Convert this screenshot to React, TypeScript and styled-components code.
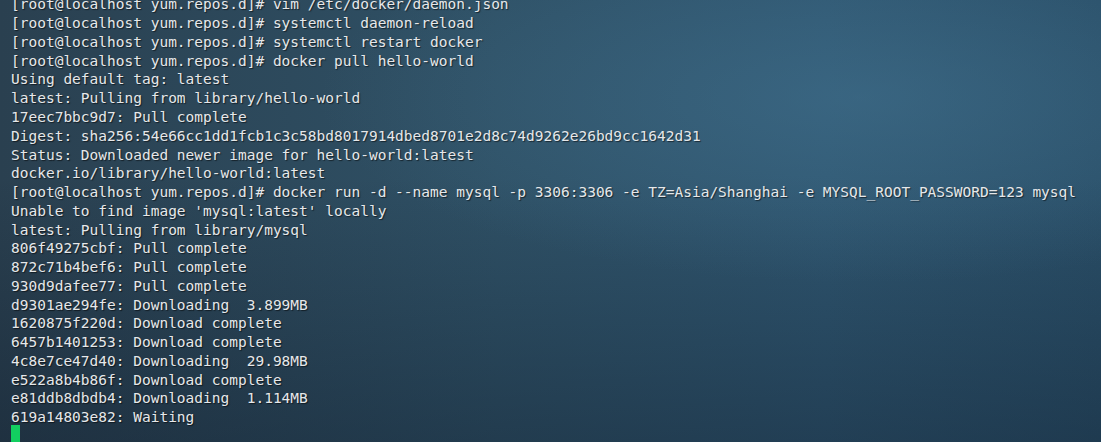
import React from "react";
import styled, { createGlobalStyle } from "styled-components";

const Global = createGlobalStyle`
  html, body {
    margin: 0;
    padding: 0;
    width: 1101px;
    height: 442px;
    overflow: hidden;
  }
`;

const Screen = styled.div`
  width: 1101px;
  height: 442px;
  overflow: hidden;
  box-sizing: border-box;
  padding-left: 11px;
  background:
    radial-gradient(ellipse 70% 60% at 78% 22%, rgba(70, 120, 150, 0.45), rgba(70, 120, 150, 0) 70%),
    linear-gradient(180deg, rgba(0, 0, 0, 0) 40%, rgba(10, 20, 35, 0.35) 100%),
    linear-gradient(90deg, #2a4050 0%, #2f5166 45%, #2f5670 75%, #2a4f68 100%);
`;

const Output = styled.pre`
  margin: -4.6px 0 0 0;
  font-family: "DejaVu Sans Mono", "Liberation Mono", monospace;
  font-size: 14.5px;
  line-height: 18.77px;
  color: #e6e8ea;
  text-shadow: 1px 1px 1px rgba(0, 0, 0, 0.55);
  white-space: pre;
`;

const Line = styled.div`
  height: 18.77px;
`;

const Cursor = styled.span`
  display: inline-block;
  width: 9px;
  height: 20px;
  margin-top: -2px;
  vertical-align: top;
  background: #12cf60;
`;

const lines = [
  "[root@localhost yum.repos.d]# vim /etc/docker/daemon.json",
  "[root@localhost yum.repos.d]# systemctl daemon-reload",
  "[root@localhost yum.repos.d]# systemctl restart docker",
  "[root@localhost yum.repos.d]# docker pull hello-world",
  "Using default tag: latest",
  "latest: Pulling from library/hello-world",
  "17eec7bbc9d7: Pull complete",
  "Digest: sha256:54e66cc1dd1fcb1c3c58bd8017914dbed8701e2d8c74d9262e26bd9cc1642d31",
  "Status: Downloaded newer image for hello-world:latest",
  "docker.io/library/hello-world:latest",
  "[root@localhost yum.repos.d]# docker run -d --name mysql -p 3306:3306 -e TZ=Asia/Shanghai -e MYSQL_ROOT_PASSWORD=123 mysql",
  "Unable to find image 'mysql:latest' locally",
  "latest: Pulling from library/mysql",
  "806f49275cbf: Pull complete",
  "872c71b4bef6: Pull complete",
  "930d9dafee77: Pull complete",
  "d9301ae294fe: Downloading  3.899MB",
  "1620875f220d: Download complete",
  "6457b1401253: Download complete",
  "4c8e7ce47d40: Downloading  29.98MB",
  "e522a8b4b86f: Download complete",
  "e81ddb8dbdb4: Downloading  1.114MB",
  "619a14803e82: Waiting",
];

export default function App() {
  return (
    <>
      <Global />
      <Screen>
        <Output>
          {lines.map((l, i) => (
            <Line key={i}>{l}</Line>
          ))}
          <Line>
            <Cursor />
          </Line>
        </Output>
      </Screen>
    </>
  );
}
